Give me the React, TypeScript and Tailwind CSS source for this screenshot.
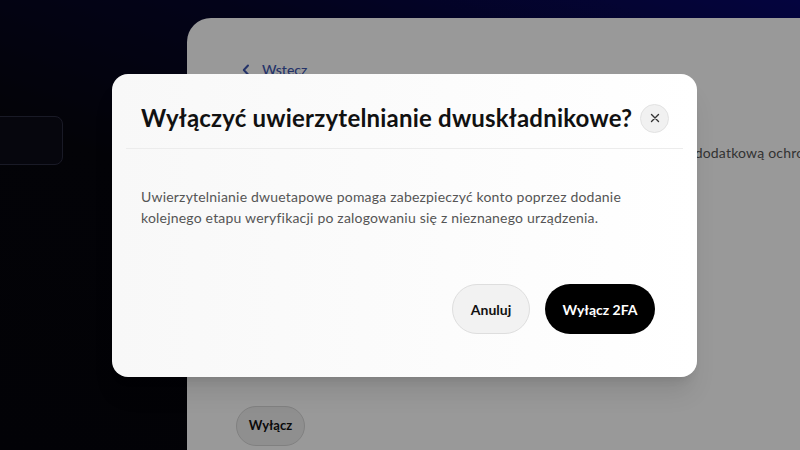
import React from 'react';

const font = { fontFamily: 'Lato, "Noto Sans", sans-serif' };

function CloseIcon() {
  return (
    <svg width="10" height="10" viewBox="0 0 10 10" fill="none" stroke="#333" strokeWidth="1.4" strokeLinecap="round">
      <path d="M1.5 1.5l7 7M8.5 1.5l-7 7" />
    </svg>
  );
}

export default function App() {
  return (
    <div
      className="relative flex h-[450px] w-[800px] overflow-hidden bg-[linear-gradient(200deg,#08086a_0%,#05052c_28%,#05050d_55%,#04040a_100%)]"
      style={font}
    >
      {/* Sidebar */}
      <aside className="w-[187px] shrink-0">
        <div className="ml-[-20px] mt-[116px] h-[49px] w-[83px] rounded-lg border border-[#2b2c40] bg-[#0a0a17]" />
      </aside>

      {/* Main panel */}
      <main className="mt-[18px] flex flex-1 flex-col rounded-tl-[24px] bg-white pl-[55px] pt-[42px]">
        <div className="flex items-center gap-[12px] text-[14px] leading-[20px] text-[#3c56b0]">
          <svg width="8" height="12" viewBox="0 0 8 12" fill="none" stroke="currentColor" strokeWidth="2" strokeLinecap="round" strokeLinejoin="round">
            <path d="M6 1.5L1.8 6 6 10.5" />
          </svg>
          <span className="font-medium">Wstecz</span>
        </div>
        <h2 className="mt-[22px] text-[22px] font-bold text-black">Uwierzytelnianie dwuskładnikowe</h2>
        <p className="mt-[8px] whitespace-nowrap text-[14px] leading-[20px] tracking-[0.2px] text-[#555]">
          Włącz uwierzytelnianie dwuskładnikowe, aby zapewnić swojemu kontu dodatkową ochronę.
        </p>
        <button className="ml-[-6px] mt-[243px] h-[40px] w-[69px] rounded-full border border-[#d6d6d6] bg-[#efefef] text-[13px] font-bold text-[#111]">
          Wyłącz
        </button>
      </main>

      {/* Overlay */}
      <div className="absolute inset-0 flex items-center justify-center bg-black/40 pl-[9px] pt-[1px]">
        <div className="flex h-[303px] w-[585px] flex-col rounded-[16px] bg-gradient-to-r from-[#f8f8f8] to-white shadow-xl">
          <div className="mt-[28px] flex h-[32px] items-center justify-between pl-[29px] pr-[28px]">
            <h1 className="whitespace-nowrap text-[24px] font-bold leading-[32px] tracking-[0.2px] text-[#111]">
              Wyłączyć uwierzytelnianie dwuskładnikowe?
            </h1>
            <button className="flex h-[29px] w-[29px] shrink-0 items-center justify-center rounded-full border border-[#e2e2e2] bg-[#f1f1f1]">
              <CloseIcon />
            </button>
          </div>
          <div className="mx-[14px] mt-[14px] h-px bg-[#ececec]" />
          <p className="mt-[37px] whitespace-nowrap px-[29px] text-[14px] leading-[21px] tracking-[0.2px] text-[#555]">
            Uwierzytelnianie dwuetapowe pomaga zabezpieczyć konto poprzez dodanie
            <br />
            kolejnego etapu weryfikacji po zalogowaniu się z nieznanego urządzenia.
          </p>
          <div className="mb-[43px] mt-auto flex justify-end gap-[15px] pr-[42px]">
            <button className="h-[50px] w-[78px] rounded-full border border-[#dedede] bg-[#f2f2f2] text-[14px] font-bold text-[#111]">
              Anuluj
            </button>
            <button className="h-[50px] w-[110px] rounded-full bg-black text-[14px] font-bold text-white">
              Wyłącz 2FA
            </button>
          </div>
        </div>
      </div>
    </div>
  );
}
